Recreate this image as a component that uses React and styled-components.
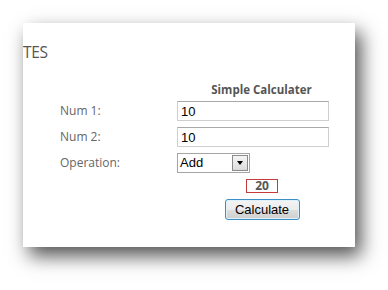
import React, { useState } from 'react';
import styled, { createGlobalStyle } from 'styled-components';

const GlobalStyle = createGlobalStyle`
  html, body {
    margin: 0;
    padding: 0;
    background: #ffffff;
  }
`;

const Page = styled.div`
  width: 388px;
  height: 290px;
  padding: 23px 0 0 23px;
  box-sizing: border-box;
  overflow: hidden;
`;

const Card = styled.div`
  width: 332px;
  height: 224px;
  box-sizing: border-box;
  background: #ffffff;
  box-shadow: 6px 9px 18px rgba(0, 0, 0, 0.68);
  padding-top: 20px;
`;

const Title = styled.h2`
  margin: 0;
  font-family: 'Open Sans', sans-serif;
  font-size: 15.5px;
  font-weight: 400;
  line-height: 18px;
  color: #555555;
  letter-spacing: -0.3px;
`;

const Form = styled.div`
  display: grid;
  grid-template-columns: 117px 169px;
  row-gap: 6px;
  margin: 22px 0 0 37px;
  align-items: center;
`;

const Heading = styled.div`
  grid-column: 2;
  text-align: center;
  font-family: 'Open Sans', sans-serif;
  font-size: 11.5px;
  font-weight: 700;
  line-height: 14px;
  color: #555555;
  margin-bottom: -2px;
`;

const Label = styled.label`
  font-family: 'Open Sans', sans-serif;
  font-size: 12px;
  color: #666666;
  line-height: 20px;
`;

const Field = styled.input`
  width: 152px;
  height: 20px;
  box-sizing: border-box;
  border: 1px solid #cfcfcf;
  border-top-color: #a9a9a9;
  padding: 0 3px;
  font-family: 'Liberation Sans', Arial, sans-serif;
  font-size: 13px;
  color: #000000;
  outline: none;
`;

const SelectBox = styled.div`
  width: 73px;
  height: 20px;
  box-sizing: border-box;
  border: 1px solid #a5a5a5;
  display: flex;
  align-items: stretch;
  font-family: 'Liberation Sans', Arial, sans-serif;
  font-size: 13px;
  color: #000000;
`;

const SelectValue = styled.span`
  flex: 1;
  padding-left: 2px;
  line-height: 18px;
`;

const DropButton = styled.span`
  width: 16px;
  margin: 1px;
  box-sizing: border-box;
  border: 1px solid #8a8a8a;
  background: linear-gradient(#f6f6f6, #dcdcdc);
  display: flex;
  align-items: center;
  justify-content: center;
`;

const Arrow = styled.span`
  width: 0;
  height: 0;
  border-left: 3.5px solid transparent;
  border-right: 3.5px solid transparent;
  border-top: 4px solid #000000;
`;

const Centered = styled.div`
  grid-column: 2;
  display: flex;
  justify-content: center;
`;

const Result = styled.span`
  width: 32px;
  height: 14px;
  box-sizing: border-box;
  border: 1px solid #c33b3b;
  text-align: center;
  font-family: 'Open Sans', sans-serif;
  font-size: 12px;
  font-weight: 700;
  line-height: 12px;
  color: #555555;
  margin-left: 1px;
`;

const Button = styled.button`
  width: 75px;
  height: 21px;
  box-sizing: border-box;
  border: 1px solid #3c8fc4;
  border-radius: 3px;
  background: linear-gradient(#f4f4f4 0%, #ececec 50%, #dedede 51%, #cfcfcf 100%);
  box-shadow: inset 0 0 0 1px #dff2fb;
  font-family: 'Liberation Sans', Arial, sans-serif;
  font-size: 13px;
  color: #000000;
  padding: 0;
  margin-left: 1px;
`;

export default function App() {
  const [a, setA] = useState('10');
  const [b, setB] = useState('10');

  return (
    <>
      <GlobalStyle />
      <Page>
        <Card>
          <Title>TES</Title>
          <Form>
            <Heading>Simple Calculater</Heading>
            <Label>Num 1:</Label>
            <Field value={a} onChange={(e) => setA(e.target.value)} />
            <Label>Num 2:</Label>
            <Field value={b} onChange={(e) => setB(e.target.value)} />
            <Label>Operation:</Label>
            <SelectBox>
              <SelectValue>Add</SelectValue>
              <DropButton><Arrow /></DropButton>
            </SelectBox>
            <Centered><Result>20</Result></Centered>
            <Centered><Button>Calculate</Button></Centered>
          </Form>
        </Card>
      </Page>
    </>
  );
}
